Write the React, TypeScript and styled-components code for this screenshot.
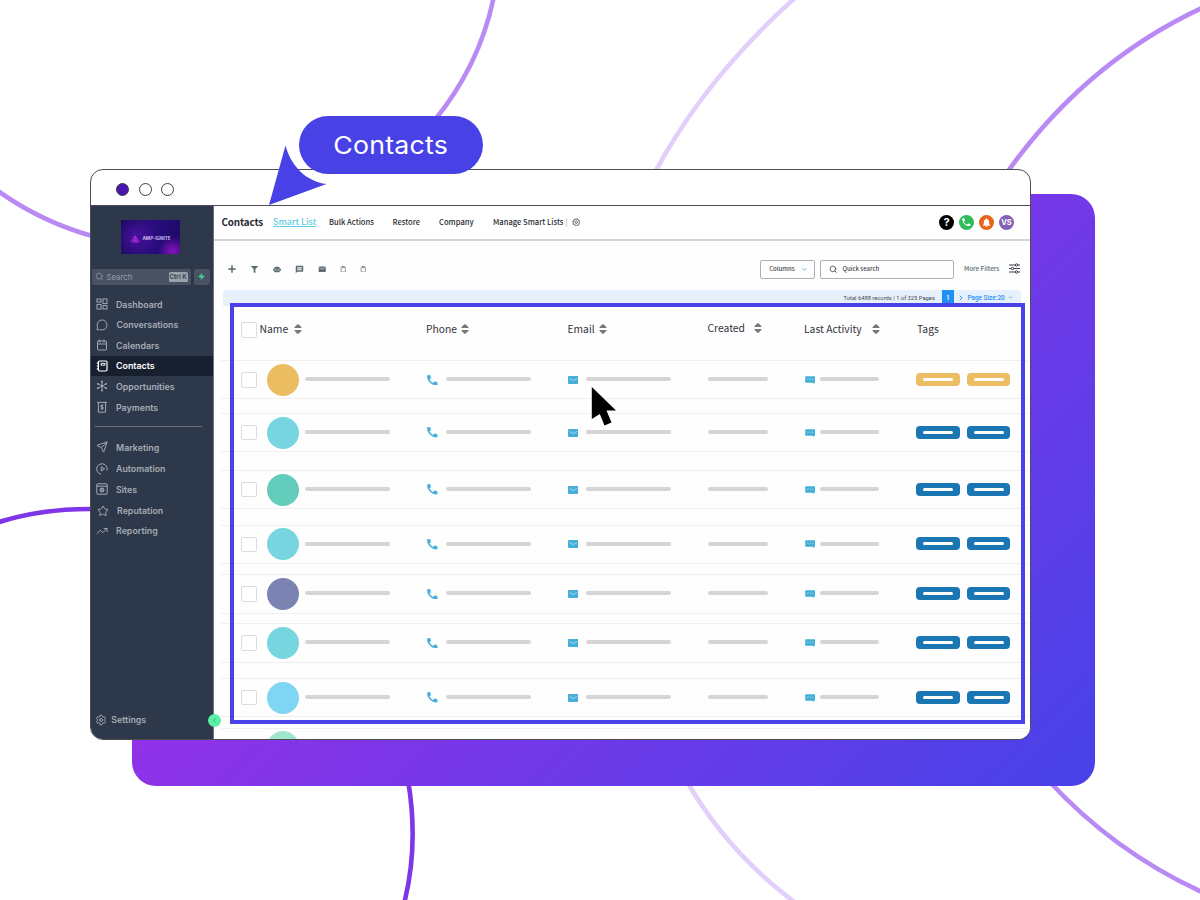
import React from "react";
import styled, { createGlobalStyle } from "styled-components";
import {
  MessageCircle, Calendar, Send, Star, TrendingUp, Settings as Gear, Search, Zap,
  ChevronDown, ChevronRight, ChevronLeft, Clipboard,
} from "lucide-react";
import { MdEmail, MdMessage, MdNotifications } from "react-icons/md";
import { FaFilter, FaRobot } from "react-icons/fa";

const source = `"Noto Sans CJK SC", "Noto Sans", sans-serif`;
const sky = "#45afd8";

const Global = createGlobalStyle`
  * { box-sizing: border-box; }
  body { margin: 0; background: #fff; }
  svg { display: block; flex: none; }
`;

const Stage = styled.div`
  position: relative;
  width: 1200px;
  height: 900px;
  overflow: hidden;
  background: #fff;
`;

const Curves = styled.svg`
  position: absolute;
  inset: 0;
`;

const Backdrop = styled.div`
  position: absolute;
  left: 132px;
  top: 194px;
  width: 963px;
  height: 592px;
  border-radius: 24px;
  background: linear-gradient(135deg, #9b30e8 0%, #9431e8 32%, #4842e8 98%);
`;

const Window = styled.div`
  position: absolute;
  left: 90px;
  top: 169px;
  width: 941px;
  height: 571px;
  border: 1.4px solid #4d4d52;
  border-radius: 13px;
  overflow: hidden;
  background: #fff;
  display: flex;
  flex-direction: column;
`;

const TitleBar = styled.div`
  height: 35.5px;
  flex: none;
  border-bottom: 1.4px solid #4d4d52;
  display: flex;
  align-items: center;
  gap: 9.2px;
  padding: 3.6px 0 0 25.4px;
`;

const Dot = styled.i<{ $on?: boolean }>`
  width: 13px;
  height: 13px;
  border-radius: 50%;
  border: 1.4px solid #3e3e44;
  background: ${(p) => (p.$on ? "#4a14b0" : "#fff")};
`;

const Body = styled.div`
  flex: 1;
  display: flex;
  min-height: 0;
`;

const Sidebar = styled.nav`
  width: 123px;
  flex: none;
  background: #2d384b;
  border-right: 1px solid #6b7280;
  display: flex;
  flex-direction: column;
  position: relative;
  font-family: Inter, sans-serif;
`;

const Logo = styled.div`
  width: 59px;
  height: 34px;
  margin: 14.5px 0 0 30px;
  flex: none;
  background:
    radial-gradient(circle at 88% 92%, #8a10c0 0, transparent 25%),
    radial-gradient(circle at 25% 50%, #4a12a0 0, transparent 45%),
    linear-gradient(100deg, #1a0a5c, #2a0c80 50%, #1b0a66);
  display: flex;
  align-items: center;
  justify-content: center;
  gap: 1px;
  padding-top: 3px;
  color: #c9bcec;
  font-size: 4.6px;
  font-weight: 700;
  line-height: 6px;
`;

const SearchRow = styled.div`
  display: flex;
  gap: 3px;
  margin: 14.5px 0 0 1px;
  height: 16.5px;
`;

const SearchBox = styled.div`
  width: 98.5px;
  border-radius: 2px;
  background: #485262;
  color: #949ba6;
  display: flex;
  align-items: center;
  padding: 0 3px;
  font-size: 7.8px;
  font-family: Inter, sans-serif;
  svg { margin-right: 2.5px; }
`;

const Key = styled.span`
  margin-left: auto;
  width: 19px;
  height: 10px;
  border-radius: 1.5px;
  background: #9aa1ab;
  color: #303a4a;
  font-size: 6.3px;
  line-height: 10px;
  font-weight: 600;
  text-align: center;
  white-space: nowrap;
`;

const Bolt = styled.div`
  width: 16px;
  border-radius: 2px;
  background: #485262;
  display: flex;
  align-items: center;
  justify-content: center;
`;

const Item = styled.div<{ $active?: boolean; $gap?: number; $shift?: number }>`
  height: 20.6px;
  flex: none;
  margin-top: ${(p) => p.$gap ?? 0}px;
  display: flex;
  align-items: center;
  gap: 8px;
  padding-left: ${(p) => 5 + (p.$shift ?? 0)}px;
  font-size: 8.8px;
  font-weight: 600;
  letter-spacing: 0.02px;
  white-space: nowrap;
  color: ${(p) => (p.$active ? "#fff" : "#a6abb4")};
  background: ${(p) => (p.$active ? "#182030" : "transparent")};
`;

const Rule = styled.hr`
  width: 107px;
  height: 1.2px;
  flex: none;
  margin: 8.2px 0 0 4px;
  border: 0;
  background: #667080;
`;

const SettingsItem = styled(Item)`
  position: relative;
  margin-top: auto;
  margin-bottom: 9px;
  gap: 4.2px;
  padding-left: 4px;
`;

const Collapse = styled.div`
  position: absolute;
  z-index: 2;
  left: 207.5px;
  top: 713.5px;
  width: 13px;
  height: 13px;
  border-radius: 50%;
  background: #5af0a6;
  display: flex;
  align-items: center;
  justify-content: center;
`;

const Main = styled.main`
  flex: 1;
  min-width: 0;
  display: flex;
  flex-direction: column;
  background: #fefefe;
  font-family: ${source};
  color: #2b2b33;
`;

const TopNav = styled.header`
  height: 35px;
  flex: none;
  border-bottom: 2px solid #d4d4d6;
  background: #fff;
  display: flex;
  align-items: center;
  padding: 0 16px 0 7.5px;
  white-space: nowrap;
`;

const Text = styled.span<{ $w: number; $size?: number; $weight?: number; $track?: number; $color?: string; $underline?: boolean; $font?: string; $left?: number }>`
  width: ${(p) => p.$w}px;
  flex: none;
  margin-left: ${(p) => p.$left ?? 0}px;
  font-size: ${(p) => p.$size ?? 7.6}px;
  font-weight: ${(p) => p.$weight ?? 500};
  letter-spacing: ${(p) => p.$track ?? 0}px;
  line-height: 14px;
  white-space: nowrap;
  color: ${(p) => p.$color ?? "inherit"};
  text-decoration: ${(p) => (p.$underline ? "underline" : "none")};
  text-decoration-thickness: 1px;
  text-underline-offset: 1px;
  font-family: ${(p) => p.$font ?? "inherit"};
`;

const Actions = styled.div`
  margin-left: auto;
  display: flex;
  gap: 5px;
`;

const Round = styled.span<{ $bg: string; $size?: number }>`
  width: 15px;
  height: 15px;
  border-radius: 50%;
  background: ${(p) => p.$bg};
  color: #fff;
  display: flex;
  align-items: center;
  justify-content: center;
  font: 700 ${(p) => p.$size ?? 7.5}px/15px Inter, sans-serif;
`;

const Tools = styled.div`
  height: 20px;
  flex: none;
  margin-top: 18.5px;
  display: flex;
  align-items: center;
  padding: 0 10.5px 0 12px;
  color: #5c6b70;
`;

const Tool = styled.span<{ $w: number }>`
  width: ${(p) => p.$w}px;
  height: 18px;
  display: flex;
  align-items: center;
  justify-content: center;
`;

const Field = styled.div<{ $w: number }>`
  width: ${(p) => p.$w}px;
  height: 19px;
  border: 1px solid #b0b0b4;
  border-radius: 2px;
  display: flex;
  align-items: center;
  padding: 0 8px;
  color: #45454c;
`;

const Pager = styled.div`
  height: 16px;
  flex: none;
  margin: 10.5px 9px 0 8.5px;
  border-radius: 3px 3px 0 0;
  background: #e7f1fd;
  display: flex;
  align-items: center;
  justify-content: flex-end;
  padding-right: 8px;
  color: #44484f;
`;

const PageNo = styled.span`
  width: 12.5px;
  height: 16px;
  background: #1e90f5;
  color: #fff;
  text-align: center;
  font: 500 6.5px/16px Roboto, sans-serif;
  margin-right: 3px;
`;

const Head = styled.div`
  height: 54.6px;
  flex: none;
  display: flex;
  padding: 13px 0 0 27px;
  color: #33333d;
`;

const Cell = styled.div<{ $w: number; $gap?: number; $down?: number }>`
  width: ${(p) => p.$w}px;
  height: 20px;
  flex: none;
  display: flex;
  align-items: center;
  gap: ${(p) => p.$gap ?? 6}px;
  margin-top: ${(p) => p.$down ?? 0}px;
`;

const Check = styled.span<{ $drop?: number }>`
  width: 15.5px;
  height: 15.5px;
  flex: none;
  margin-top: ${(p) => p.$drop ?? 0}px;
  border: 1.2px solid #dcdcdf;
  border-radius: 2px;
  background: #fff;
`;

const Row = styled.div<{ $gap: number }>`
  height: 39.4px;
  flex: none;
  margin: ${(p) => p.$gap}px 2px 0 7px;
  border-top: 1.4px solid #f0f0f1;
  border-bottom: 1.2px solid #f0f0f1;
  display: flex;
  align-items: center;
  padding-left: 20px;
`;

const Avatar = styled.span<{ $c: string }>`
  width: 32px;
  height: 32px;
  flex: none;
  margin: 0 5.5px 0 10.5px;
  border-radius: 50%;
  background: ${(p) => p.$c};
`;

const Bar = styled.span<{ $w: number }>`
  width: ${(p) => p.$w}px;
  height: 4px;
  flex: none;
  margin-top: -1px;
  border-radius: 2px;
  background: #d6d4d5;
`;

const Tag = styled.span<{ $c: string }>`
  width: 43.5px;
  height: 13px;
  flex: none;
  margin: -1px 7.3px 0 0;
  border-radius: 4px;
  background: ${(p) => p.$c};
  display: flex;
  align-items: center;
  justify-content: center;
  &::after {
    content: "";
    width: 30px;
    height: 3px;
    border-radius: 1.5px;
    background: #fff;
  }
`;

const Highlight = styled.div`
  position: absolute;
  left: 230px;
  top: 303px;
  width: 795px;
  height: 420.5px;
  border: 4px solid #4842e8;
`;

const Callout = styled.div`
  position: absolute;
  left: 299px;
  top: 116.4px;
  width: 184px;
  height: 57.6px;
  border-radius: 29px;
  background: #4842e6;
  color: #fff;
  display: flex;
  align-items: center;
  justify-content: center;
  font: 400 24.5px/30px Inter, sans-serif;
  letter-spacing: 0.2px;
  span { transform: scaleX(1.09); }
`;

const Pointer = styled.svg`
  position: absolute;
  left: 268px;
  top: 145px;
`;

const Cursor = styled.svg`
  position: absolute;
  left: 591px;
  top: 387px;
`;

const Sort = () => (
  <svg width="8" height="10" viewBox="0 0 8 10" fill="#77777c">
    <path d="M4 0C4.300 0 7.600 3.100 7.600 3.600 7.600 4 7.300 4.100 7 4.100H1C.7 4.100.4 4 .4 3.600.4 3.100 3.700 0 4 0zM4 10C4.300 10 7.600 6.900 7.600 6.400 7.600 6 7.300 5.900 7 5.900H1C.7 5.900.4 6 .4 6.400.4 6.900 3.700 10 4 10z" />
  </svg>
);

const Phone = ({ size, color, stroke = 0 }: { size: number; color: string; stroke?: number }) => (
  <svg width={size} height={size} viewBox="2.500 2.500 19 19" fill={color} stroke={color} strokeWidth={stroke}>
    <path d="M6.620 10.790c1.440 2.830 3.760 5.140 6.590 6.590l2.200-2.200c.27-.27.67-.36 1.020-.24 1.120.37 2.330.57 3.570.57.55 0 1 .45 1 1V20c0 .55-.45 1-1 1-9.390 0-17-7.610-17-17 0-.55.45-1 1-1h3.500c.55 0 1 .45 1 1 0 1.250.2 2.450.57 3.570.11.35.03.74-.25 1.020z" />
  </svg>
);

const Mail = () => (
  <svg width="10.5" height="8" viewBox="0 0 10.500 8">
    <rect width="10.500" height="8" rx=".8" fill={sky} />
    <path d="M1.400 2.400 5.250 4.600 9.100 2.400" fill="none" stroke="#b4e0f1" strokeWidth=".8" />
  </svg>
);

const Chat = () => (
  <svg width="10.5" height="8" viewBox="0 0 10.500 8">
    <path d="M.8.3h9a.6.600 0 0 1 .6.600V6.100L9.200 6.700V7.900L7.600 6.700H.8a.6.600 0 0 1-.6-.6V.9A.6.600 0 0 1 .8.300z" fill={sky} />
    <path d="M2.200 3.200h1.300M4.600 3.200h1.300M7 3.200h1.300" stroke="#a8dcf0" strokeWidth=".9" />
  </svg>
);

const Plus = () => (
  <svg width="8" height="8" viewBox="0 0 8 8" stroke="currentColor" strokeWidth="1.5">
    <path d="M4 .2v7.600M.2 4h7.600" />
  </svg>
);

const Sliders = () => (
  <svg width="11" height="11" viewBox="0 0 11 11" fill="#fff" stroke="#3a3f48" strokeWidth="1">
    <path d="M0 2h11M0 5.500h11M0 9h11" />
    <circle cx="7.500" cy="2" r="1.200" /><circle cx="3.500" cy="5.500" r="1.200" /><circle cx="7.500" cy="9" r="1.200" />
  </svg>
);

const Cog = () => (
  <svg width="8.5" height="8.5" viewBox="0 0 9 9" fill="none" stroke="#5a5a62">
    <circle cx="4.500" cy="4.500" r="3.400" strokeWidth=".9" />
    <circle cx="4.500" cy="4.500" r="1.300" strokeWidth="1" />
    <circle cx="4.500" cy="4.500" r="4" strokeWidth=".7" strokeDasharray="1.200 1.940" />
  </svg>
);

const Book = () => (
  <svg width="12" height="12" viewBox="0 0 12 12" fill="none" stroke="currentColor" strokeWidth="1.2">
    <rect x="2.4" y="1" width="8.6" height="10" rx="1.2" />
    <path d="M.8 3.2h2M.8 6h2M.8 8.8h2" />
    <path d="M5 3.400h4v1.800H5z" strokeWidth=".9" />
  </svg>
);

const Receipt = () => (
  <svg width="12" height="12" viewBox="0 0 12 12" fill="none" stroke="currentColor" strokeWidth="1">
    <path d="M1 1.4h10M2.4 1.4v9.8h7.2V1.4M7.3 4.3H5.6a.9.9 0 0 0 0 1.8h.8a.9.9 0 0 1 0 1.8H4.7M6 3.5v5.2" />
  </svg>
);

const Hub = () => (
  <svg width="12" height="12" viewBox="0 0 12 12" fill="none" stroke="currentColor" strokeWidth="1">
    <path d="M6 1v3M6 8v3M2 3.900 4.200 5M7.800 5 10 3.900M2 8.100 4.200 7M7.800 7 10 8.100" />
    <circle cx="6" cy="6" r="1.2" fill="currentColor" />
    <path d="M6 1.500h.01M1.700 3.800h.01M10.300 3.800h.01M1.700 8.200h.01M10.300 8.200h.01M6 10.500h.01" strokeWidth="1.8" strokeLinecap="round" />
  </svg>
);

const AutoIcon = () => (
  <svg width="12" height="12" viewBox="0 0 12 12" fill="none" stroke="currentColor" strokeWidth="1" strokeLinecap="round">
    <path d="M4.6 11.2A5.3 5.3 0 1 1 11.2 7M5.2 4.2v3.8L8.3 6.1z" />
  </svg>
);

const Site = () => (
  <svg width="12" height="12" viewBox="0 0 12 12" fill="none" stroke="currentColor" strokeWidth="1">
    <rect x=".8" y=".8" width="10.4" height="10.4" rx=".6" />
    <path d="M.8 3.2h10.4" />
    <circle cx="6" cy="7" r="2" fill="currentColor" fillOpacity=".6" />
  </svg>
);

const Dash = () => (
  <svg width="12" height="12" viewBox="0 0 12 12" fill="none" stroke="currentColor" strokeWidth="1">
    <rect x="1" y="1" width="4" height="3" /><rect x="7" y="1" width="4" height="4.6" />
    <rect x="1" y="6.4" width="4" height="4.6" /><rect x="7" y="7.6" width="4" height="3.4" />
  </svg>
);

const thin = { size: 12, strokeWidth: 1.9 };

const primary = [
  { name: "Dashboard", icon: <Dash /> },
  { name: "Conversations", icon: <MessageCircle {...thin} />, shift: 0.4 },
  { name: "Calendars", icon: <Calendar {...thin} /> },
  { name: "Contacts", icon: <Book />, active: true },
  { name: "Opportunities", icon: <Hub /> },
  { name: "Payments", icon: <Receipt /> },
];

const secondary = [
  { name: "Marketing", icon: <Send {...thin} />, gap: 10.2 },
  { name: "Automation", icon: <AutoIcon />, gap: 0.9 },
  { name: "Sites", icon: <Site />, gap: -0.2 },
  { name: "Reputation", icon: <Star {...thin} />, gap: 1.2, shift: 1 },
  { name: "Reporting", icon: <TrendingUp {...thin} />, gap: -0.7 },
];

const columns = [
  { name: "Phone", w: 141.5, text: 31.5, gap: 3.2 },
  { name: "Email", w: 140, text: 28, gap: 3.2 },
  { name: "Created", w: 96.5, text: 37.5, gap: 8.6, down: -0.6 },
  { name: "Last Activity", w: 113, text: 58, gap: 9.5, down: 0.8 },
];

const blue = "#1a77b4";
const rows = [
  { gap: 0, avatar: "#ecbc60", tag: "#ecbd62" },
  { gap: 13.4, avatar: "#76d5df", tag: blue },
  { gap: 17.6, avatar: "#63ccbb", tag: blue },
  { gap: 15.4, avatar: "#76d5df", tag: blue },
  { gap: 10.2, avatar: "#7b83b2", tag: blue },
  { gap: 9.6, avatar: "#76d5df", tag: blue },
  { gap: 15.4, avatar: "#7ed6f3", tag: blue },
];

export default function App() {
  return (
    <Stage>
      <Global />
      <Curves width="1200" height="900" fill="none" strokeWidth="4.6">
        <g stroke="#b98af4">
          <path d="M-6 188Q40 222 96 237" />
          <path d="M494-4Q480 65 434 121" />
          <path d="M1204 7Q1085 62 1006 174" />
          <path d="M1048 780Q1114 852 1204 893" />
        </g>
        <g stroke="#e2cffb">
          <path d="M797-4Q705 78 654 174" />
          <path d="M686 780Q728 853 797 904" />
        </g>
        <g stroke="#7f35e8">
          <path d="M-4 523Q42 508 96 509" />
          <path d="M408 780Q419 845 404 904" />
        </g>
      </Curves>
      <Backdrop />
      <Window>
        <TitleBar>
          <Dot $on />
          <Dot />
          <Dot />
        </TitleBar>
        <Body>
          <Sidebar>
            <Logo>
              <svg width="11" height="8" viewBox="0 0 10 8" fill="none" stroke="#b32be0" strokeWidth="1.1">
                <path d="M.8 7 4.6 1.2 8.6 7M3 7l1.8-3 1.6 3z" />
              </svg>
              AMP-IGNITE
            </Logo>
            <SearchRow>
              <SearchBox>
                <Search size={9} strokeWidth={1.8} />
                Search
                <Key>Ctrl K</Key>
              </SearchBox>
              <Bolt><Zap size={7} fill="#3ddc97" color="#3ddc97" /></Bolt>
            </SearchRow>
            {primary.map((i, n) => (
              <Item key={i.name} $active={i.active} $gap={n ? 0 : 8.8} $shift={i.shift}>
                {i.icon}
                {i.name}
              </Item>
            ))}
            <Rule />
            {secondary.map((i) => (
              <Item key={i.name} $gap={i.gap} $shift={i.shift}>
                {i.icon}
                {i.name}
              </Item>
            ))}
            <SettingsItem>
              <Gear {...thin} />
              Settings
            </SettingsItem>
          </Sidebar>
          <Main>
            <TopNav>
              <Text $w={51.5} $size={9.9} $track={-0.15} $weight={700}>Contacts</Text>
              <Text $w={56} $size={9} $track={-0.05} $color="#62cfe6" $underline>Smart List</Text>
              <Text $w={63.5}>Bulk Actions</Text>
              <Text $w={46.5}>Restore</Text>
              <Text $w={54}>Company</Text>
              <Text $w={72.500}>Manage Smart Lists</Text>
              <Text $w={6} $color="#aaa">|</Text>
              <Cog />
              <Actions>
                <Round $bg="#000" $size={11}>?</Round>
                <Round $bg="#2fbd5b"><Phone size={8.5} color="#fff" /></Round>
                <Round $bg="#e8631a"><MdNotifications size={11} /></Round>
                <Round $bg="#8460b8">VS</Round>
              </Actions>
            </TopNav>
            <Tools>
              <Tool $w={11}><Plus /></Tool>
              <Tool $w={34}><FaFilter size={7} /></Tool>
              <Tool $w={11}><FaRobot size={8} /></Tool>
              <Tool $w={35}><MdMessage size={9} /></Tool>
              <Tool $w={10}><MdEmail size={8.5} /></Tool>
              <Tool $w={33}><Clipboard size={6.5} strokeWidth={2.4} /></Tool>
              <Tool $w={7}><Clipboard size={6.5} strokeWidth={2.4} /></Tool>
              <Actions>
                <Field $w={55}>
                  <Text $w={32} $size={6}>Columns</Text>
                  <ChevronDown size={7} color="#3a9be8" strokeWidth={2.6} />
                </Field>
                <Field $w={134.5} style={{ marginLeft: -0.7 }}>
                  <Search size={8.5} strokeWidth={2.2} />
                  <Text $w={60} $size={6} $left={5.5}>Quick search</Text>
                </Field>
                <Tool $w={44.5}><Text $w={34.5} $size={6.3}>More Filters</Text></Tool>
                <Tool $w={11}><Sliders /></Tool>
              </Actions>
            </Tools>
            <Pager>
              <Text $w={98} $size={5.8} $weight={400} $font="Roboto, sans-serif">Total 6488 records | 1 of 325 Pages</Text>
              <PageNo>1</PageNo>
              <ChevronRight size={8} color="#1e90f5" strokeWidth={2.6} />
              <Text $w={40.5} $size={6.4} $color="#1e90f5" $font="Roboto, sans-serif" $left={2.5}>Page Size:20</Text>
              <ChevronDown size={5} />
            </Pager>
            <Head>
              <Cell $w={18.5}><Check $drop={3} /></Cell>
              <Cell $w={166.5} $gap={5.2}><Text $w={29} $size={10.4} $weight={400}>Name</Text><Sort /></Cell>
              {columns.map((c) => (
                <Cell key={c.name} $w={c.w} $gap={c.gap} $down={c.down}>
                  <Text $w={c.text} $size={10.3} $weight={400}>{c.name}</Text>
                  <Sort />
                </Cell>
              ))}
              <Cell $w={60}><Text $w={30} $size={10.3} $weight={400}>Tags</Text></Cell>
            </Head>
            {rows.map((r, n) => (
              <Row key={n} $gap={r.gap}>
                <Cell $w={186} $gap={0}><Check /><Avatar $c={r.avatar} /><Bar $w={85} /></Cell>
                <Cell $w={140.5} $gap={8}><Phone size={10.5} color={sky} stroke={0.9} /><Bar $w={85.5} /></Cell>
                <Cell $w={140.5} $gap={8}><Mail /><Bar $w={85} /></Cell>
                <Cell $w={96.5}><Bar $w={59.5} /></Cell>
                <Cell $w={111.5} $gap={5}><Chat /><Bar $w={59} /></Cell>
                <Tag $c={r.tag} />
                <Tag $c={r.tag} />
              </Row>
            ))}
            <Row $gap={10.4}><Cell $w={185} $gap={0}><Check /><Avatar $c="#9fe6cb" /></Cell></Row>
          </Main>
        </Body>
      </Window>
      <Collapse><ChevronLeft size={7} color="#1d8a5c" /></Collapse>
      <Highlight />
      <Callout><span>Contacts</span></Callout>
      <Pointer width="60" height="62" viewBox="0 0 60 62" fill="#4842e6">
        <path d="M17.5.5C23 21 38 36.500 58.500 39L1 60z" />
      </Pointer>
      <Cursor width="26" height="40" viewBox="0 0 26 40">
        <path d="M.8 0 25 23.500H15.500L20.500 35.500 13.500 38.500 8.800 27 .8 32z" />
      </Cursor>
    </Stage>
  );
}
